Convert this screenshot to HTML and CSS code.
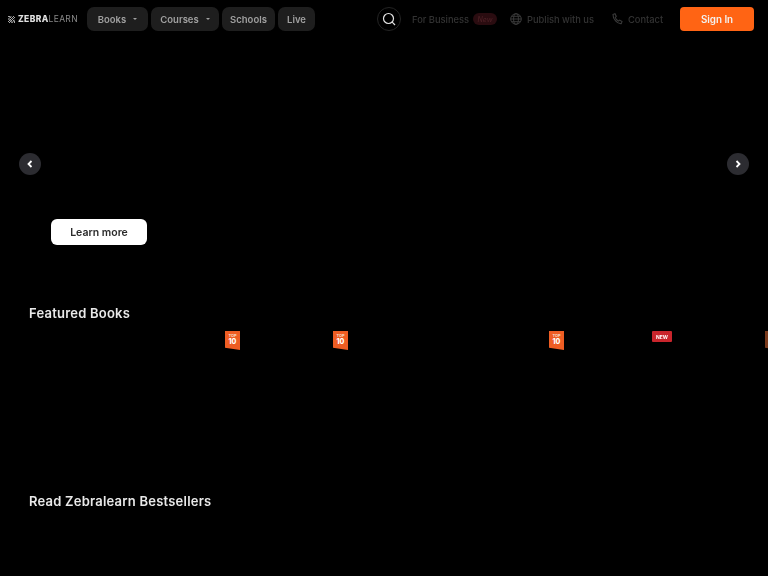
FILE: index.html
```html
<!DOCTYPE html>
<html lang="en">
<head>
<meta charset="utf-8">
<title>Zebralearn</title>
<link rel="stylesheet" href="styles.css">
</head>
<body>
<header class="header">
  <a class="logo">
    <svg class="logo-mark" width="7" height="7" viewBox="0 0 7 7" fill="none" stroke="#a8a8a8" stroke-width="1"><path d="M0 1l1-1M0 3.500L3.500 0M0 6l6-6M1 7l6-6M3.500 7L7 3.500M6 7l1-1M1 0l6 6M0 2.500L4.500 7"/></svg>
    <span class="logo-bold">ZEBRA</span><span class="logo-light">LEARN</span>
  </a>
  <nav class="nav">
    <a class="pill pill-books">Books <span class="caret"></span></a>
    <a class="pill pill-courses">Courses <span class="caret"></span></a>
    <a class="pill pill-schools">Schools</a>
    <a class="pill pill-live">Live</a>
  </nav>
  <div class="right">
    <button class="search" aria-label="Search">
      <svg width="14" height="14" viewBox="0 0 14 14" fill="none" stroke="#e4e4e4" stroke-width="1.200"><circle cx="6.500" cy="6.500" r="5"/><path d="M10.200 10.200L13 13"/></svg>
    </button>
    <a class="dim dim-business">For Business <span class="new-tag">New</span></a>
    <a class="dim dim-publish">
      <svg width="12" height="12" viewBox="0 0 12 12" fill="none" stroke="#3a3a3a"><circle cx="6" cy="6" r="5.300"/><ellipse cx="6" cy="6" rx="2.400" ry="5.300"/><path d="M.7 6h10.600M1.500 3.300h9M1.500 8.700h9"/></svg>
      Publish with us
    </a>
    <a class="dim dim-contact">
      <svg width="11" height="12" viewBox="0 0 11 12" fill="none" stroke="#3a3a3a" stroke-width="1.100"><path d="M1 1.500L3 .8l1.300 2.600-1.100 1c.5 1.500 1.700 3 3.200 3.700l1.200-1 2.400 1.500-.7 2c-4 .5-8.500-4.500-8.300-9.100z"/></svg>
      Contact
    </a>
    <a class="signin">Sign In</a>
  </div>
</header>

<section class="hero">
  <button class="arrow arrow-left" aria-label="Previous">
    <svg width="6" height="8" viewBox="0 0 6 8" fill="none" stroke="#fff" stroke-width="1.800"><path d="M4.500 1L1.500 4l3 3"/></svg>
  </button>
  <button class="arrow arrow-right" aria-label="Next">
    <svg width="6" height="8" viewBox="0 0 6 8" fill="none" stroke="#fff" stroke-width="1.800"><path d="M1.500 1l3 3-3 3"/></svg>
  </button>
  <a class="learn">Learn more</a>
</section>

<section class="featured">
  <h2 class="title">Featured Books</h2>
  <div class="books">
    <div class="book"></div>
    <div class="book"><span class="top"><i>TOP</i><b>10</b></span></div>
    <div class="book"><span class="top"><i>TOP</i><b>10</b></span></div>
    <div class="book"></div>
    <div class="book"><span class="top"><i>TOP</i><b>10</b></span></div>
    <div class="book"><span class="new">NEW</span></div>
    <div class="book"><span class="top top-edge"></span></div>
  </div>
</section>

<section class="bestsellers">
  <h2 class="title">Read Zebralearn Bestsellers</h2>
</section>
</body>
</html>
```

FILE: styles.css
```css
* { box-sizing: border-box; }
html, body { margin: 0; height: 576px; overflow: hidden; }
body {
  background: #000;
  color: #fff;
  font-family: Inter, "Noto Sans", "Liberation Sans", sans-serif;
}
a { display: inline-flex; align-items: center; text-decoration: none; }
button { border: 0; padding: 0; display: flex; align-items: center; justify-content: center; }
.header, .hero, .featured, .bestsellers { filter: blur(.4px); }

.header { height: 38px; display: flex; align-items: center; padding: 0 14px 0 8px; }
.logo { font-size: 8.500px; letter-spacing: .35px; width: 79px; flex: none; }
.logo-mark { margin-right: 3px; }
.logo-bold { font-weight: 800; color: #e0e0e0; }
.logo-light { font-weight: 400; color: #8a8a8a; }

.nav { display: flex; gap: 3px; }
.pill {
  height: 24px;
  background: #1e1e1e;
  border-radius: 7px;
  color: #a0a0a0;
  font-size: 9.500px;
  font-weight: 600;
  justify-content: center;
  gap: 7px;
}
.pill-books { width: 61px; }
.pill-courses { width: 68px; }
.pill-schools { width: 53px; }
.pill-live { width: 37px; }
.caret { width: 0; height: 0; border: 2px solid transparent; border-top: 2.500px solid #a0a0a0; border-bottom: 0; }

.right { margin-left: auto; display: flex; align-items: center; }
.search { width: 24px; height: 24px; border-radius: 50%; background: #000; border: 1px solid #242424; margin-right: 11px; }
.dim { color: #333; font-size: 9.300px; font-weight: 500; gap: 5px; }
.dim-business { width: 98px; gap: 4px; }
.new-tag { width: 24px; height: 12px; border-radius: 6px; background: #2a0c10; color: #4b1f24; font-size: 7px; display: flex; align-items: center; justify-content: center; font-style: italic; }
.dim-publish { width: 102px; }
.dim-contact { width: 68px; }
.signin { width: 74px; height: 24px; border-radius: 4px; background: #ff6414; color: #f2f2f2; font-size: 9.800px; font-weight: 600; justify-content: center; }

.hero { position: relative; height: 251px; }
.arrow { position: absolute; top: 115px; width: 22px; height: 22px; border-radius: 50%; background: #2c2c31; }
.arrow-left { left: 19px; }
.arrow-right { right: 19px; }
.learn {
  position: absolute;
  left: 51px;
  top: 181px;
  width: 96px;
  height: 26px;
  border-radius: 6px;
  background: #fff;
  color: #2a2a2a;
  font-size: 10.500px;
  font-weight: 600;
  justify-content: center;
}

.title { margin: 0; padding-left: 29px; font-size: 13px; line-height: 16px; font-weight: 600; color: #e9e9e9; letter-spacing: .22px; }

.featured { padding-top: 16px; height: 188px; overflow: hidden; }
.books { display: flex; margin: 10px 0 0 24px; width: 800px; }
.book { width: 108px; flex: none; height: 24px; display: flex; justify-content: flex-end; align-items: flex-start; }
.top {
  width: 15px;
  height: 19px;
  background: #ee5d23;
  clip-path: polygon(0 0, 100% 0, 100% 100%, 0 88%);
  display: flex;
  flex-direction: column;
  align-items: center;
  color: #f5e0d4;
  padding-top: 2px;
}
.top i { font-style: normal; font-size: 4px; line-height: 5px; font-weight: 600; }
.top b { font-size: 7px; line-height: 8px; font-weight: 800; color: #fff; }
.top-edge { background: #7a3a1c; }
.new {
  width: 20px;
  height: 11px;
  background: #c9252c;
  border-radius: 1px;
  color: #fff;
  font-size: 5px;
  font-weight: 700;
  display: flex;
  align-items: center;
  justify-content: center;
}

.bestsellers { padding-top: 16px; }
```
